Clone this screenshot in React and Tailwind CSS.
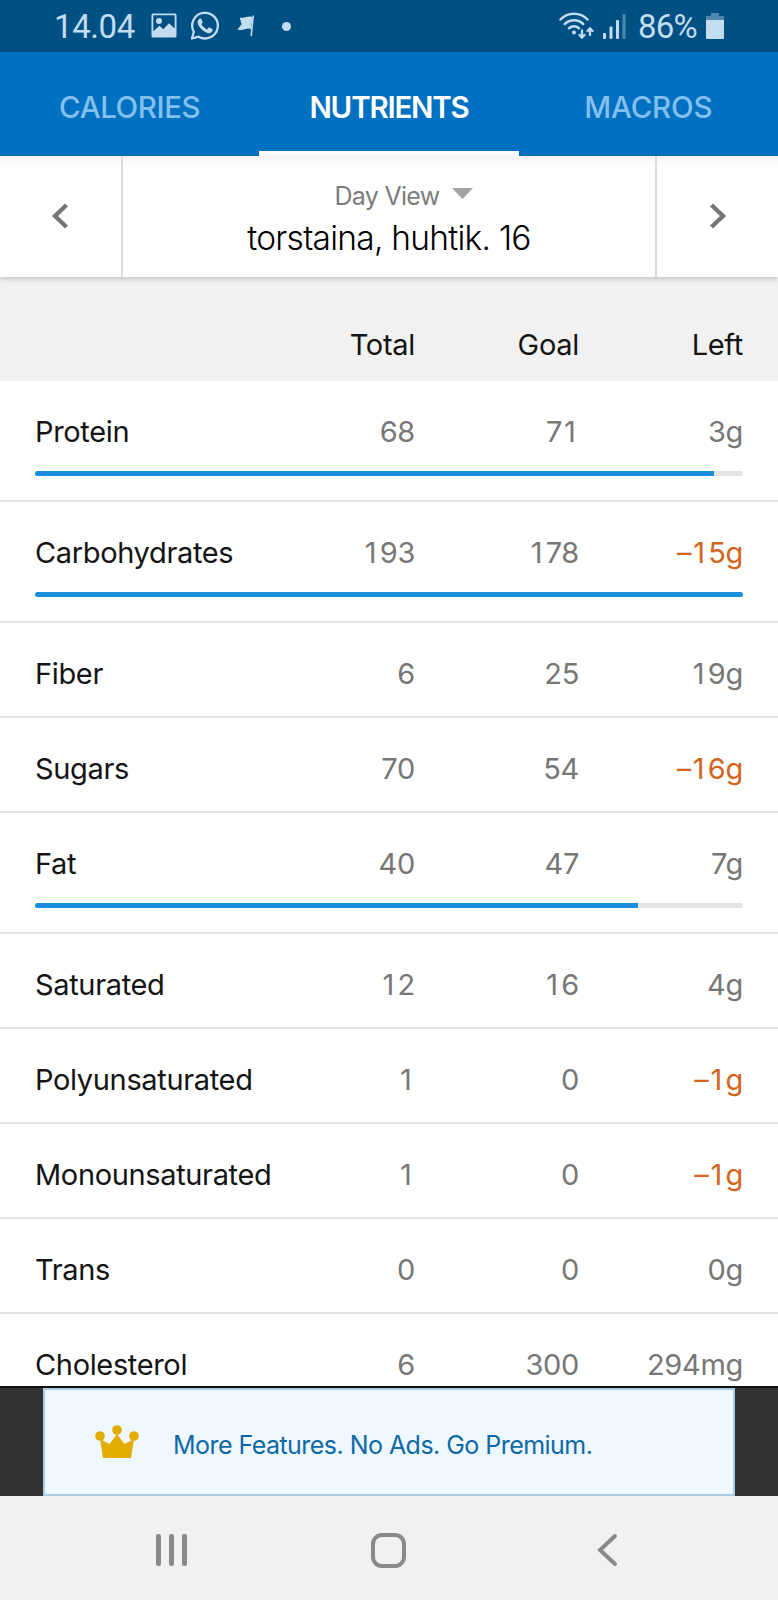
const rows = [
  { name: "Protein", total: "68", goal: "71", left: "3g", fill: 95.9, h: "h-[121px]" },
  { name: "Carbohydrates", total: "193", goal: "178", left: "–15g", fill: 100, h: "h-[121px]", over: true },
  { name: "Fiber", total: "6", goal: "25", left: "19g", h: "h-[95px]" },
  { name: "Sugars", total: "70", goal: "54", left: "–16g", h: "h-[95px]", over: true },
  { name: "Fat", total: "40", goal: "47", left: "7g", fill: 85.2, h: "h-[121px]" },
  { name: "Saturated", total: "12", goal: "16", left: "4g", h: "h-[95px]" },
  { name: "Polyunsaturated", total: "1", goal: "0", left: "–1g", h: "h-[95px]", over: true },
  { name: "Monounsaturated", total: "1", goal: "0", left: "–1g", h: "h-[95px]", over: true },
  { name: "Trans", total: "0", goal: "0", left: "0g", h: "h-[95px]" },
  { name: "Cholesterol", total: "6", goal: "300", left: "294mg", h: "h-[95px]" },
];

function StatusBar() {
  return (
    <div className="flex h-[52px] shrink-0 items-center bg-[#005083] font-[Roboto,sans-serif] text-[33px] leading-[52px] text-[#c2dcf0]">
      <span className="ml-[54px] w-[81px] whitespace-nowrap pt-0.5 tracking-[-0.4px]">14.04</span>
      <svg className="ml-4 h-[26px] w-[26px]" viewBox="0 0 26 26">
        <path fillRule="evenodd" fill="currentColor" d="M2 0.5H24Q25.5 0.5 25.5 2V23Q25.5 24.5 24 24.5H2Q0.5 24.5 0.5 23V2Q0.5 0.5 2 0.5ZM2.3 2.3V18.2L8.5 12.7L12.3 16.3L18 10.3L23.7 15.5V2.3Z" />
        <circle cx="8" cy="8" r="3" fill="currentColor" />
      </svg>
      <svg className="ml-[13px] h-[30px] w-[30px]" viewBox="0 0 30 30" fill="none">
        <path d="M2 27.5L3.8 20.8A12.8 12.8 0 1 1 8.6 25.7Z" stroke="currentColor" strokeWidth="2.3" strokeLinejoin="round" />
        <path fill="currentColor" d="M10.2 7.6C9.6 7.6 7.6 8.8 7.6 11.3C7.6 14 10 17 12.3 19C14.7 21 18 22.6 20 22C21.8 21.5 22.8 20 22.7 18.4C22.6 18 19.5 16.4 19 16.5C18.5 16.6 17.5 18.4 17 18.4C16.2 18.4 12.2 15.3 11.5 13.3C11.4 12.8 12.7 11.8 12.6 11.2C12.4 10.4 11.5 8 11 7.7Q10.7 7.5 10.2 7.6Z" />
      </svg>
      <svg className="ml-[17px] h-[22px] w-[20px]" viewBox="0 0 20 22" fill="currentColor">
        <path d="M2.7 2.2C6.5 4.5 9.5 0.3 15.5 2L13.8 14.2C9.5 12 6.5 16.8 0.5 14.4L4.6 9.2Z" />
        <path d="M15.4 0.5H17L15 21H13.4Z" />
      </svg>
      <span className="ml-[25px] h-[9px] w-[9px] rounded-full bg-current" />
      <svg className="ml-[267px] h-[28px] w-[38px]" viewBox="0 0 38 28" fill="none" stroke="currentColor" strokeWidth="2.5" strokeLinecap="round">
        <path d="M2.5 7.5A18.5 18.5 0 0 1 29.5 7.5" />
        <path d="M6.8 12A13 13 0 0 1 25.2 12" />
        <path d="M11 16.2A7.5 7.5 0 0 1 21 16.2" />
        <circle cx="16" cy="20.5" r="2" fill="currentColor" stroke="none" />
        <path d="M24 18.5V25M21.5 23L24 25.5L26.5 23M32 23V17M29.5 19L32 16.5L34.5 19" strokeWidth="2.3" />
      </svg>
      <svg className="ml-[7px] h-[26px] w-[24px]" viewBox="0 0 24 26" fill="currentColor">
        <rect x="0" y="20" width="3" height="6" rx="1" />
        <rect x="6.5" y="13.5" width="3" height="12.5" rx="1" />
        <rect x="13" y="7" width="3" height="19" rx="1" />
        <rect x="19.5" y="1" width="3" height="25" rx="1" opacity="0.4" />
      </svg>
      <span className="ml-[11px] w-[62px] whitespace-nowrap pt-0.5 tracking-[-0.8px]">86%</span>
      <svg className="ml-[6px] h-[26px] w-[18px]" viewBox="0 0 18 26" fill="currentColor">
        <path d="M5 0H13V3H18V7H0V3H5Z" opacity="0.4" />
        <path d="M0 7H18V25Q18 26 17 26H1Q0 26 0 25Z" />
      </svg>
    </div>
  );
}

function Tab({ label, width, active }) {
  return (
    <div className={"relative flex flex-1 items-center justify-center pt-1.5 text-[29.5px] " + (active ? "font-semibold text-white" : "font-medium text-[#84c0ed]")}>
      <span className={"whitespace-nowrap " + width}>{label}</span>
      {active && <span className="absolute inset-x-0 bottom-0 h-[5px] bg-white" />}
    </div>
  );
}

function Chevron({ d }) {
  return (
    <svg className="mb-0.5 h-[26px] w-[18px]" viewBox="0 0 18 26" fill="none" stroke="#757575" strokeWidth="4.3">
      <path d={d} />
    </svg>
  );
}

// Gives the narrow "1" the same advance as the other digits.
function Figures({ text }) {
  return text.split(/(1)/).map((part, i) =>
    part === "1" ? <span key={i} className="pl-[2px] pr-[3.5px]">1</span> : part
  );
}

function Cells({ total, goal, left, leftClass }) {
  return (
    <>
      <span className="w-[130px] text-right"><Figures text={total} /></span>
      <span className="w-[164px] text-right"><Figures text={goal} /></span>
      <span className={"w-[164px] text-right " + leftClass}><Figures text={left} /></span>
    </>
  );
}

function Row({ name, total, goal, left, fill, h, over }) {
  return (
    <div className={"shrink-0 border-b-2 border-[#e3e3e3] bg-white px-[35px] pt-[31px] " + h}>
      <div className="flex h-10 items-center text-[29px] tracking-[-0.3px] text-[#777777]">
        <span className="flex-1 whitespace-nowrap tracking-[-0.35px] text-[#141414]">{name}</span>
        <Cells total={total} goal={goal} left={left} leftClass={over ? "text-[#d4651b]" : ""} />
      </div>
      {fill && (
        <div className="mt-[19px] h-[5px] overflow-hidden rounded-full bg-[#e4e4e4]">
          <div className="h-full bg-[#1a8fdd]" style={{ width: fill + "%" }} />
        </div>
      )}
    </div>
  );
}

export default function App() {
  return (
    <div className="flex h-[1600px] w-[778px] flex-col overflow-hidden bg-white font-[Inter,sans-serif]">
      <StatusBar />
      <div className="flex h-[104px] shrink-0 bg-[#0070c0]">
        <Tab label="CALORIES" width="tracking-[-0.4px]" />
        <Tab label="NUTRIENTS" width="tracking-[-1.2px]" active />
        <Tab label="MACROS" width="tracking-[-0.2px]" />
      </div>
      <div className="z-10 flex h-[121px] shrink-0 bg-white shadow-[0_2px_5px_rgba(0,0,0,0.2)]">
        <div className="flex w-[123px] items-center justify-center border-r-2 border-[#dcdcdc] bg-linear-to-b from-[#f4f4f4] to-white to-10% pr-0.5">
          <Chevron d="M15.5 2L4 13L15.5 24" />
        </div>
        <div className="flex flex-1 flex-col items-center bg-linear-to-b from-[#f4f4f4] to-white to-10% pt-[25px]">
          <div className="flex h-8 items-center text-[25px] tracking-[-0.7px] text-[#7c7c7c]">
            <span className="ml-[29px]">Day View</span>
            <svg className="mb-2 ml-3 h-[11px] w-[21px]" viewBox="0 0 21 11"><path d="M0 0H21L10.5 11Z" fill="#a3a3a3" /></svg>
          </div>
          <div className="mt-[5px] text-[33.5px] font-light leading-10 tracking-[-0.75px] text-black">torstaina, huhtik. 16</div>
        </div>
        <div className="flex w-[123px] items-center justify-center border-l-2 border-[#dcdcdc] bg-linear-to-b from-[#f4f4f4] to-white to-10%">
          <Chevron d="M2.5 2L14 13L2.5 24" />
        </div>
      </div>
      <div className="flex h-[104px] shrink-0 items-center bg-[#f1f1f1] px-[35px] pt-[32px] text-[29px] tracking-[-0.3px] text-[#141414]">
        <span className="flex-1" />
        <Cells total="Total" goal="Goal" left="Left" leftClass="" />
      </div>
      <div className="h-[1005px] overflow-hidden">
        {rows.map((r) => <Row key={r.name} {...r} />)}
      </div>
      <div className="flex h-[110px] shrink-0 justify-center border-t-2 border-[#101010] bg-[#323232]">
        <div className="flex h-[108px] w-[692px] items-center border-2 border-[#aacbe4] bg-[#f0f8ff]">
          <svg className="ml-[50px] h-[34px] w-[44px]" viewBox="0 0 44 34" fill="#e3ad00">
            <path d="M5 14L14.5 19L22 9L29.5 19L39 14L36 33H8Z" />
            <circle cx="5" cy="11" r="4.8" /><circle cx="22" cy="5" r="4.8" /><circle cx="39" cy="11" r="4.8" />
          </svg>
          <span className="ml-[34px] mt-2 whitespace-nowrap text-[25px] tracking-[-0.54px] text-[#0c69a8]">More Features. No Ads. Go Premium.</span>
        </div>
      </div>
      <div className="flex h-[104px] shrink-0 items-center bg-[#f1f1f1] pt-1">
        <svg className="ml-[155px] h-[36px] w-[34px]" viewBox="0 0 34 36" fill="#8a8a8a">
          <rect x="1" y="2" width="5" height="32" rx="2" /><rect x="14" y="2" width="5" height="32" rx="2" /><rect x="27" y="2" width="5" height="32" rx="2" />
        </svg>
        <span className="ml-[182px] h-[35px] w-[35px] rounded-[11px] border-4 border-[#8a8a8a]" />
        <svg className="ml-[190px] h-[36px] w-[24px]" viewBox="0 0 24 36" fill="none" stroke="#8a8a8a" strokeWidth="4" strokeLinecap="round">
          <path d="M19 4L4 18L19 32" />
        </svg>
      </div>
    </div>
  );
}
